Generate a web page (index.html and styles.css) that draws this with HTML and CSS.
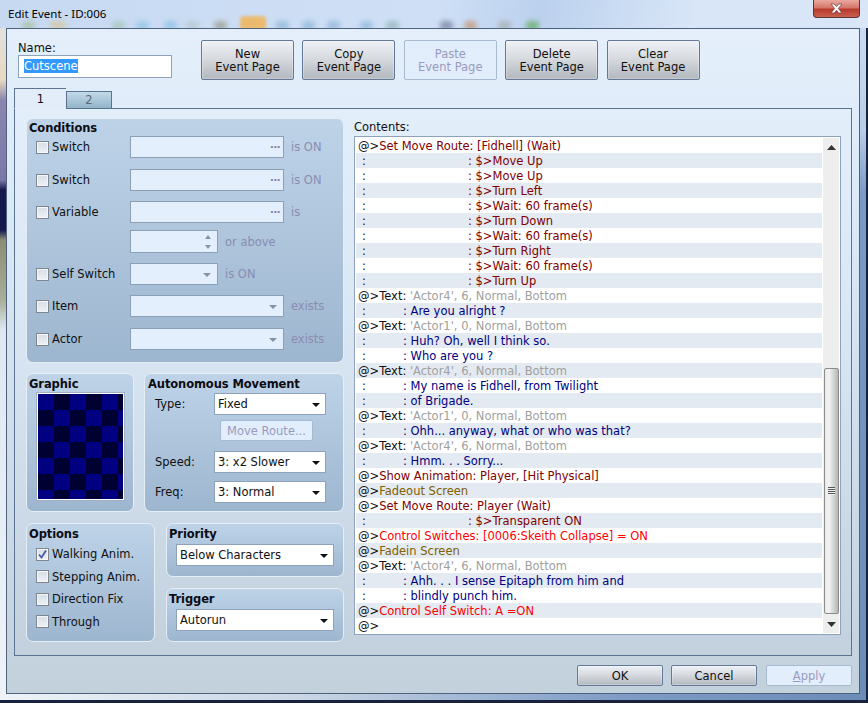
FILE: index.html
```html
<!DOCTYPE html>
<html lang="en">
<head>
<meta charset="utf-8">
<title>Edit Event</title>
<link rel="stylesheet" href="styles.css">
</head>
<body>
<div class="window">
  <header class="titlebar">
    <span class="blob b1"></span><span class="blob b2"></span><span class="blob b3"></span><span class="blob b4"></span><span class="blob b5"></span><span class="blob b6"></span><span class="blob b7"></span><span class="blob b8"></span><span class="blob b9"></span><span class="blob b10"></span><span class="blob b11"></span><span class="blob b12"></span><span class="blob b13"></span><span class="blob b14"></span><span class="blob b15"></span><span class="blob b16"></span><span class="blob b17"></span>
    <span class="title">Edit Event - ID:006</span>
    <button class="close" aria-label="Close"><svg width="13" height="11" viewBox="0 0 13 11"><path d="M1 1h3.200l2.300 2.600L8.800 1H12L8.300 5.500 12 10H8.800L6.500 7.300 4.200 10H1l3.700-4.500z" fill="#fff" stroke="#6b3a3a" stroke-width=".7"/></svg></button>
  </header>
  <div class="client">
    <section class="top">
      <div class="name">
        <label class="name-label">Name:</label>
        <div class="name-input"><span class="sel">Cutscene</span></div>
      </div>
      <div class="page-buttons">
        <button class="btn page">New<br>Event Page</button>
        <button class="btn page">Copy<br>Event Page</button>
        <button class="btn page off">Paste<br>Event Page</button>
        <button class="btn page">Delete<br>Event Page</button>
        <button class="btn page">Clear<br>Event Page</button>
      </div>
    </section>
    <nav class="tabs">
      <div class="tab active">1</div>
      <div class="tab">2</div>
    </nav>
    <section class="tabpanel">
      <div class="left">
        <div class="group conditions">
          <h3>Conditions</h3>
          <div class="cond r1"><span class="check"></span><span class="cl">Switch</span><div class="field wide"><span class="dots">...</span></div><span class="hint">is ON</span></div>
          <div class="cond r2"><span class="check"></span><span class="cl">Switch</span><div class="field wide"><span class="dots">...</span></div><span class="hint">is ON</span></div>
          <div class="cond r3"><span class="check"></span><span class="cl">Variable</span><div class="field wide"><span class="dots">...</span></div><span class="hint">is</span></div>
          <div class="cond r4"><span class="nocheck"></span><span class="cl"></span><div class="field short"><span class="spin"><i class="up"></i><i class="down"></i></span></div><span class="hint">or above</span></div>
          <div class="cond r5"><span class="check"></span><span class="cl">Self Switch</span><div class="field short"><i class="arrow dim"></i></div><span class="hint">is ON</span></div>
          <div class="cond r6"><span class="check"></span><span class="cl">Item</span><div class="field wide"><i class="arrow dim"></i></div><span class="hint">exists</span></div>
          <div class="cond r7"><span class="check"></span><span class="cl">Actor</span><div class="field wide"><i class="arrow dim"></i></div><span class="hint">exists</span></div>
        </div>
        <div class="mid">
          <div class="group graphic">
            <h3>Graphic</h3>
            <div class="preview"></div>
          </div>
          <div class="group auto">
            <h3>Autonomous Movement</h3>
            <div class="arow"><span class="al">Type:</span><div class="combo c-auto">Fixed<i class="arrow"></i></div></div>
            <button class="btn route off">Move Route...</button>
            <div class="arow a-speed"><span class="al">Speed:</span><div class="combo c-auto">3: x2 Slower<i class="arrow"></i></div></div>
            <div class="arow a-freq"><span class="al">Freq:</span><div class="combo c-auto">3: Normal<i class="arrow"></i></div></div>
          </div>
        </div>
        <div class="low">
          <div class="group options">
            <h3>Options</h3>
            <div class="opt"><span class="check on"><svg width="11" height="11" viewBox="0 0 11 11"><path d="M2 5.500l2.500 3L9 1.500" fill="none" stroke="#4a5aa8" stroke-width="1.800"/></svg></span>Walking Anim.</div>
            <div class="opt"><span class="check"></span>Stepping Anim.</div>
            <div class="opt"><span class="check"></span>Direction Fix</div>
            <div class="opt"><span class="check"></span>Through</div>
          </div>
          <div class="stack">
            <div class="group small">
              <h3>Priority</h3>
              <div class="combo c-small">Below Characters<i class="arrow"></i></div>
            </div>
            <div class="group small">
              <h3>Trigger</h3>
              <div class="combo c-small">Autorun<i class="arrow"></i></div>
            </div>
          </div>
        </div>
      </div>
      <div class="contents">
        <label class="contents-label">Contents:</label>
        <div class="listbox">
          <div class="rows">
            <div class="row"><b>@&gt;</b><span class="route">Set Move Route: [Fidhell] (Wait)</span></div>
            <div class="row"><span class="g gr">:</span><span class="route">: $&gt;Move Up</span></div>
            <div class="row"><span class="g gr">:</span><span class="route">: $&gt;Move Up</span></div>
            <div class="row"><span class="g gr">:</span><span class="route">: $&gt;Turn Left</span></div>
            <div class="row"><span class="g gr">:</span><span class="route">: $&gt;Wait: 60 frame(s)</span></div>
            <div class="row"><span class="g gr">:</span><span class="route">: $&gt;Turn Down</span></div>
            <div class="row"><span class="g gr">:</span><span class="route">: $&gt;Wait: 60 frame(s)</span></div>
            <div class="row"><span class="g gr">:</span><span class="route">: $&gt;Turn Right</span></div>
            <div class="row"><span class="g gr">:</span><span class="route">: $&gt;Wait: 60 frame(s)</span></div>
            <div class="row"><span class="g gr">:</span><span class="route">: $&gt;Turn Up</span></div>
            <div class="row"><b>@&gt;</b>Text: <span class="meta">'Actor4', 6, Normal, Bottom</span></div>
            <div class="row"><span class="g gt">:</span><span class="msg">: Are you alright ?</span></div>
            <div class="row"><b>@&gt;</b>Text: <span class="meta">'Actor1', 0, Normal, Bottom</span></div>
            <div class="row"><span class="g gt">:</span><span class="msg">: Huh? Oh, well I think so.</span></div>
            <div class="row"><span class="g gt">:</span><span class="msg">: Who are you ?</span></div>
            <div class="row"><b>@&gt;</b>Text: <span class="meta">'Actor4', 6, Normal, Bottom</span></div>
            <div class="row"><span class="g gt">:</span><span class="msg">: My name is Fidhell, from Twilight</span></div>
            <div class="row"><span class="g gt">:</span><span class="msg">: of Brigade.</span></div>
            <div class="row"><b>@&gt;</b>Text: <span class="meta">'Actor1', 0, Normal, Bottom</span></div>
            <div class="row"><span class="g gt">:</span><span class="msg">: Ohh... anyway, what or who was that?</span></div>
            <div class="row"><b>@&gt;</b>Text: <span class="meta">'Actor4', 6, Normal, Bottom</span></div>
            <div class="row"><span class="g gt">:</span><span class="msg">: Hmm. . . Sorry...</span></div>
            <div class="row"><b>@&gt;</b><span class="route">Show Animation: Player, [Hit Physical]</span></div>
            <div class="row"><b>@&gt;</b><span class="fade">Fadeout Screen</span></div>
            <div class="row"><b>@&gt;</b><span class="route">Set Move Route: Player (Wait)</span></div>
            <div class="row"><span class="g gr">:</span><span class="route">: $&gt;Transparent ON</span></div>
            <div class="row"><b>@&gt;</b><span class="ctrl">Control Switches: [0006:Skeith Collapse] = ON</span></div>
            <div class="row"><b>@&gt;</b><span class="fade">Fadein Screen</span></div>
            <div class="row"><b>@&gt;</b>Text: <span class="meta">'Actor4', 6, Normal, Bottom</span></div>
            <div class="row"><span class="g gt">:</span><span class="msg">: Ahh. . . I sense Epitaph from him and</span></div>
            <div class="row"><span class="g gt">:</span><span class="msg">: blindly punch him.</span></div>
            <div class="row"><b>@&gt;</b><span class="ctrl">Control Self Switch: A =ON</span></div>
            <div class="row"><b>@&gt;</b></div>
          </div>
          <div class="scrollbar">
            <svg class="sb-arrow" width="9" height="5" viewBox="0 0 9 5"><path d="M0 5L4.500 0 9 5z" fill="#333"/></svg>
            <div class="thumb"><span class="grip"></span></div>
            <svg class="sb-arrow" width="9" height="5" viewBox="0 0 9 5"><path d="M0 0L9 0 4.500 5z" fill="#333"/></svg>
          </div>
        </div>
      </div>
    </section>
    <footer class="actions">
      <button class="btn act">OK</button>
      <button class="btn act">Cancel</button>
      <button class="btn act off apply"><u>A</u>pply</button>
    </footer>
  </div>
</div>
</body>
</html>
```
FILE: styles.css
```css
* { box-sizing: border-box; }
html, body { margin: 0; padding: 0; }
body {
  width: 868px; height: 703px; overflow: hidden;
  font: 11.5px "DejaVu Sans", sans-serif;
  color: #101010;
  background: #1a2338;
}
.window {
  width: 868px; height: 703px;
  padding: 0 8px 9px 6px;
  display: flex; flex-direction: column;
  background:
    linear-gradient(#dfe6ee 0, #e8d9c0 80px, #8a86b0 100px, #7a78a8 180px, #14184e 190px, #14184e 230px, #8c8e74 240px, #a8ae98 300px, #dfe8f2 330px, #eef3f8 100%) 0 0 / 6px 100% no-repeat,
    linear-gradient(90deg, #eef3f8 0, #c9d6e6 300px, #7e9cc6 620px, #6c8cb8 100%) 0 100% / 100% 9px no-repeat,
    linear-gradient(#cfe0f5 0, #b8cee9 130px, #7b9ac6 193px, #6c8cb8 100%);
  box-shadow: inset -2px -3px 0 #18223a;
  position: relative;
}
.titlebar {
  height: 28px; flex: none;
  position: relative;
  overflow: hidden;
  margin: 0 -8px 0 -6px;
  padding-left: 8px;
  background: linear-gradient(100deg, #c7d9f1 0, #cfe0f6 50%, #bcd1ee 62%, #d8e6f7 80%, #d8e6f7 100%);
}
.title { position: absolute; left: 8px; top: 5px; font: 11.500px/18px "Noto Sans", sans-serif; color: #000; }
.blob { position: absolute; top: 21px; height: 9px; width: 13px; border-radius: 4px; filter: blur(2.500px); opacity: .75; background: #aac3dd; }
.b1 { left: 22px; background: #a9c2a2; }
.b2 { left: 50px; background: #d3c7a0; width: 16px; }
.b3 { left: 112px; background: #a6c6b8; }
.b4 { left: 136px; background: #90c4e8; }
.b5 { left: 164px; background: #8fc0e8; }
.b6 { left: 186px; background: #b4c8cf; }
.b7 { left: 214px; background: #9aa08e; }
.b8 { left: 240px; width: 26px; top: 16px; height: 14px; background: #eeb860; opacity: .9; filter: blur(1.500px); }
.b9 { left: 276px; background: #8fb6d8; }
.b10 { left: 302px; background: #8fb6d8; }
.b11 { left: 327px; background: #8fb6d8; }
.b12 { left: 360px; background: #90b8e0; }
.b13 { left: 386px; background: #90b8b8; }
.b14 { left: 440px; background: #78809f; }
.b15 { left: 464px; background: #c49878; }
.b16 { left: 498px; background: #a8aeb4; }
.b17 { left: 526px; background: #62ae62; }
.close {
  position: absolute; right: 8px; top: 0;
  width: 47px; height: 18px; padding: 0;
  border: 1px solid #5c3434; border-top: 0;
  border-radius: 0 0 4px 4px;
  background: linear-gradient(#e9a9a0 0, #d5766a 45%, #b8392c 55%, #c8604f 100%);
  display: flex; align-items: center; justify-content: center;
}
.client {
  flex: 1;
  border: 1px solid #4f627c;
  padding: 0 7px;
  display: flex; flex-direction: column;
  background: linear-gradient(#e4effb 0, #dce9f7 170px, #c3d1dd 100%);
}
.top { height: 59px; display: flex; flex: none; padding-top: 11px; position: relative; }
.name { width: 187px; padding-left: 4px; }
.name-label { display: block; height: 15px; padding-top: 1px; }
.name-input {
  width: 154px; height: 23px; background: #fff;
  border: 1px solid #8ea2bb;
  padding: 3px 0 0 5px;
  line-height: 14px;
}
.sel { background: #3399ff; color: #fff; display: inline-block; height: 14px; }
.page-buttons { display: flex; gap: 8.400px; }
.btn {
  font: inherit; color: #101010; padding: 0;
  border: 1px solid #64799a; border-radius: 2px;
  background: linear-gradient(#eef1f5 0, #d7dbe0 45%, #b2b8be 100%);
  box-shadow: inset 0 0 0 1px rgba(255,255,255,.25);
}
.btn.off {
  color: #9a9ac0; border-color: #a8bad0; box-shadow: none;
  background: #e2eefb;
}
.page { width: 93px; height: 40px; line-height: 13px; padding-top: 2px; }
.tabs { display: flex; height: 21px; flex: none; align-items: flex-end; margin-bottom: -1px; position: relative; z-index: 1; }
.tab {
  width: 46px; height: 18px; text-align: center; line-height: 17px;
  border: 1px solid #5d7392; border-bottom: 1px solid #5d7392;
  background: linear-gradient(#c3d9e8, #92b5c9);
  color: #5a6a80;
}
.tab.active {
  width: 52px; height: 21px; line-height: 20px; color: #101010;
  background: #e2edf9; border-bottom-color: #e2edf9; border-right: 0;
}
.tabpanel {
  height: 548px; flex: none;
  border: 1px solid #5d7392;
  padding: 9px 10px 0 11px;
  display: flex; gap: 10px;
  background: linear-gradient(#e3eefb 0, #dae7f5 200px, #c3d1de 100%);
}
.left { width: 318px; flex: none; display: flex; flex-direction: column; gap: 10px; }
.group {
  border: 1px solid #e6eef5;
  border-radius: 7px;
  background: linear-gradient(#bed3e8 0, #9db6cf 100%);
  position: relative;
}
.group h3 { margin: 0; font-size: 11.500px; font-weight: bold; color: #0c0c14; line-height: 13px; padding: 3px 0 0 2px; letter-spacing: -.1px; }
.mid .group h3, .low .group h3 { padding-top: 4px; }
.conditions { height: 245px; padding: 0; }
.conditions h3 { height: 16px; padding-left: 2px; }
.cond { display: flex; align-items: center; height: 22px; padding-left: 9px; }
.r1 { margin-top: 1px; }
.r2, .r3, .r5, .r6 { margin-top: 10px; }
.r2 { margin-top: 11px; }
.r4 { margin-top: 7px; height: 23px; }
.r7 { margin-top: 11px; }
.check {
  width: 13px; height: 13px; flex: none; display: inline-block;
  border: 1px solid #80868e;
  background: linear-gradient(#d6dde5, #eef2f7);
  box-shadow: inset 0 0 0 1px #f4f7fa;
  position: relative;
}
.check svg { position: absolute; left: 0; top: 0; }
.nocheck { width: 13px; flex: none; }
.cl { width: 81px; flex: none; padding-left: 3px; }
.field {
  height: 100%; background: #e3effc;
  border: 1px solid #8b9fb5;
  position: relative; flex: none;
}
.wide { width: 154px; }
.short { width: 88px; }
.dots { position: absolute; right: 3px; top: 2px; color: #80809a; font-weight: bold; font-size: 10px; letter-spacing: -.5px; }
.hint { color: #8a8cb2; padding-left: 7px; }
.spin { position: absolute; right: 5px; top: 3px; width: 7px; height: 15px; }
.spin i { position: absolute; left: 0; border-left: 3.500px solid transparent; border-right: 3.500px solid transparent; }
.spin .up { top: 1px; border-bottom: 4px solid #8a90aa; }
.spin .down { bottom: 0; border-top: 4px solid #8a90aa; }
.arrow {
  position: absolute; right: 5px; top: 9px;
  border-left: 4px solid transparent; border-right: 4px solid transparent;
  border-top: 4px solid #111;
}
.arrow.dim { border-top-color: #8a90aa; right: 6px; }
.mid { height: 139px; display: flex; gap: 10px; flex: none; }
.graphic { width: 108px; }
.graphic h3 { height: 19px; }
.preview {
  width: 87px; height: 107px; margin: 0 0 0 10px;
  border: 1px solid #fff; outline: 1px solid #a0b0c0;
  background: conic-gradient(#000033 25%, #000080 0 50%, #000033 0 75%, #000080 0) 0 0 / 32px 32px;
}
.auto { width: 200px; padding: 0; }
.arow { display: flex; align-items: center; height: 22px; padding-left: 10px; }
.al { width: 59px; flex: none; }
.auto h3 { height: 19px; padding-left: 3px; }
.combo {
  height: 22px; background: #fff; border: 1px solid #8ea2bb;
  position: relative; padding-left: 3px; line-height: 21px; color: #101010;
}
.c-auto { width: 112px; flex: none; }
.route.btn { display: block; width: 93px; height: 21px; margin: 5px 0 0 75px; }
.a-speed { margin-top: 10px; }
.a-freq { margin-top: 8px; }
.low { display: flex; gap: 11px; margin-top: 1px; height: 119px; flex: none; }
.options { width: 129px; }
.options h3 { height: 19px; }
.opt { display: flex; align-items: center; gap: 3px; height: 22.500px; padding-left: 9px; }
.stack { width: 178px; display: flex; flex-direction: column; justify-content: space-between; }
.small { height: 54px; }
.small h3 { height: 20px; padding-left: 2px; }
.c-small { width: 158px; margin-left: 9px; }
.contents { width: 487px; flex: none; }
.contents-label { display: block; height: 18px; padding-top: 2px; }
.listbox {
  height: 499px; width: 487px; background: #fff;
  border: 1px solid #8ea2bb;
  padding: 1px;
  display: flex;
  position: relative;
}
.rows { width: 466px; flex: none; }
.row { height: 15px; line-height: 15px; padding: 1px 0 0 2px; white-space: pre; color: #101010; }
.row:nth-child(even) { background: #e3eaf1; }
.row b { font-weight: normal; color: #101010; }
.g { display: inline-block; padding-left: 4px; }
.gr { width: 110px; }
.gt { width: 45px; }
.route { color: #800000; }
.meta { color: #a0a0a0; }
.msg { color: #000080; }
.fade { color: #806000; }
.ctrl { color: #ff0000; }
.scrollbar {
  width: 16px; flex: none; margin-left: 1px;
  background: #eeeeee;
  display: flex; flex-direction: column; align-items: center;
  padding-top: 7px;
}
.sb-arrow { flex: none; }
.thumb {
  width: 15px; height: 246px; margin-top: 218px; margin-bottom: 8px; flex: none;
  border: 1px solid #8d8d8d; border-radius: 2px;
  background: linear-gradient(90deg, #e8e8e8 0, #f4f4f4 30%, #d8d8d8 60%, #b6b6b6 100%);
  display: flex; align-items: center; justify-content: center;
}
.grip {
  width: 7px; height: 8px;
  background: repeating-linear-gradient(#555 0 1px, #f0f0f0 1px 2px);
}
.actions {
  flex: 1; display: flex; justify-content: flex-end; gap: 8px;
  padding-top: 9px;
}
.act { width: 86px; height: 21px; }
.apply { margin-left: 1px; }
```
